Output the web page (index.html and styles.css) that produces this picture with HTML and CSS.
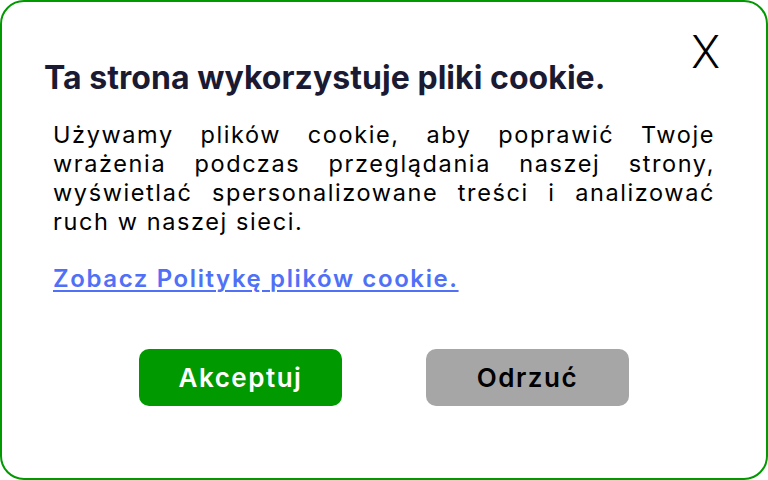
FILE: index.html
```html
<!DOCTYPE html>
<html lang="pl">
<head>
<meta charset="utf-8">
<title>Cookie</title>
<link rel="stylesheet" href="styles.css">
</head>
<body>
<div class="dialog">
  <button class="close" type="button" aria-label="Zamknij">X</button>
  <h1 class="title">Ta strona wykorzystuje pliki cookie.</h1>
  <p class="text"><span class="line">Używamy plików cookie, aby poprawić Twoje</span> <span class="line">wrażenia podczas przeglądania naszej strony,</span> <span class="line">wyświetlać spersonalizowane treści i analizować</span> <span class="line last">ruch w naszej sieci.</span></p>
  <a class="policy" href="#">Zobacz Politykę plików cookie.</a>
  <div class="actions">
    <button class="btn btn-accept" type="button">Akceptuj</button>
    <button class="btn btn-reject" type="button">Odrzuć</button>
  </div>
</div>
</body>
</html>
```
FILE: styles.css
```css
html, body {
  margin: 0;
  padding: 0;
  background: #ffffff;
}
.dialog {
  position: relative;
  box-sizing: border-box;
  width: 768px;
  height: 480px;
  border: 2px solid #009900;
  border-radius: 24px;
  background: #ffffff;
  padding: 56px 51px 0 43px;
  font-family: "Inter", sans-serif;
}
.close {
  position: absolute;
  top: 26px;
  right: 46px;
  border: 0;
  background: none;
  padding: 0;
  font-family: "Roboto", sans-serif;
  font-weight: 300;
  font-size: 47px;
  line-height: 47px;
  color: #000;
}
.title {
  margin: 0 0 0 -1px;
  font-family: "Inter", sans-serif;
  font-weight: 700;
  font-size: 32px;
  line-height: 40px;
  letter-spacing: 0.05px;
  color: #1b1a33;
}
.text {
  margin: 22px 0 0 8px;
  font-size: 23.5px;
  line-height: 29px;
  letter-spacing: 1.6px;
  color: #000;
}
.line {
  display: block;
  text-align: justify;
  text-align-last: justify;
}
.line.last {
  text-align-last: left;
}
.policy {
  display: block;
  width: max-content;
  margin: 28px 0 0 8px;
  font-size: 24px;
  line-height: 29px;
  font-weight: 600;
  letter-spacing: 1.6px;
  color: #4f70f7;
  text-decoration: underline;
  text-decoration-thickness: 2px;
  text-underline-offset: 3px;
}
.actions {
  display: flex;
  justify-content: center;
  gap: 84px;
  margin: 56px 0 0 8px;
}
.btn {
  width: 203px;
  height: 57px;
  border: 0;
  border-radius: 10px;
  padding: 0;
  font-family: "Inter", sans-serif;
  font-weight: 600;
  font-size: 26px;
  letter-spacing: 1.5px;
}
.btn-accept {
  background: #009900;
  color: #ffffff;
}
.btn-reject {
  background: #a6a6a6;
  color: #000000;
}
```
